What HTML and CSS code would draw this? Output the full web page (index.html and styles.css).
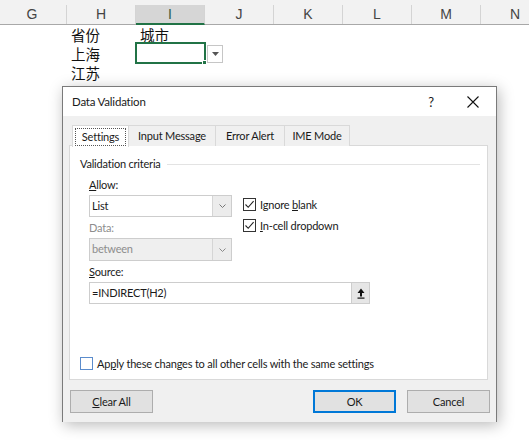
FILE: index.html
```html
<!DOCTYPE html>
<html>
<head>
<meta charset="utf-8">
<link rel="stylesheet" href="styles.css">
</head>
<body>
<div class="sheet">
  <div class="colhead">
    <div class="ch">G</div>
    <div class="ch">H</div>
    <div class="ch sel">I</div>
    <div class="ch">J</div>
    <div class="ch">K</div>
    <div class="ch">L</div>
    <div class="ch">M</div>
    <div class="ch">N</div>
  </div>
  <div class="grid">
    <div class="cell"></div><div class="cell">省份</div><div class="cell">城市</div><div class="cell"></div><div class="cell"></div><div class="cell"></div><div class="cell"></div><div class="cell"></div>
    <div class="cell"></div><div class="cell">上海</div><div class="cell active"><span class="selbox"><span class="handle"></span></span><span class="ddbtn"><svg width="7" height="4" viewBox="0 0 7 4"><path d="M0 0H7L3.5 4Z" fill="#555"/></svg></span></div><div class="cell"></div><div class="cell"></div><div class="cell"></div><div class="cell"></div><div class="cell"></div>
    <div class="cell"></div><div class="cell">江苏</div><div class="cell"></div><div class="cell"></div><div class="cell"></div><div class="cell"></div><div class="cell"></div><div class="cell"></div>
  </div>
</div>

<div class="dialog">
  <div class="titlebar">
    <span class="title">Data Validation</span>
    <span class="help">?</span>
    <span class="close"><svg width="12" height="12" viewBox="0 0 12 12"><path d="M0.5 0.5L11.5 11.5M11.5 0.5L0.5 11.5" stroke="#111" stroke-width="1.1" fill="none"/></svg></span>
  </div>
  <div class="dbody">
    <div class="tabs">
      <div class="tab active w1"><span class="focus">Settings</span></div>
      <div class="tab w2">Input Message</div>
      <div class="tab w3">Error Alert</div>
      <div class="tab w4">IME Mode</div>
    </div>
    <div class="panel">
      <div class="group"><span class="gtitle">Validation criteria</span><span class="gline"></span></div>
      <div class="criteria">
        <div class="leftcol">
          <div class="lbl"><u>A</u>llow:</div>
          <div class="combo"><span class="cval">List</span><span class="carrow"><svg width="7" height="4" viewBox="0 0 7 4"><path d="M0.5 0.5L3.5 3.5L6.5 0.5" stroke="#777" fill="none"/></svg></span></div>
          <div class="lbl dis lbl2">Data:</div>
          <div class="combo dis tall"><span class="cval">between</span><span class="carrow"><svg width="7" height="4" viewBox="0 0 7 4"><path d="M0.5 0.5L3.5 3.5L6.5 0.5" stroke="#888" fill="none"/></svg></span></div>
        </div>
        <div class="rightcol">
          <div class="check first"><span class="box"><svg width="11" height="11" viewBox="0 0 11 11"><path d="M1.5 5.5L4.2 8.3L9.6 2.2" stroke="#222" stroke-width="1.1" fill="none"/></svg></span><span>Ignore <u>b</u>lank</span></div>
          <div class="check second"><span class="box"><svg width="11" height="11" viewBox="0 0 11 11"><path d="M1.5 5.5L4.2 8.3L9.6 2.2" stroke="#222" stroke-width="1.1" fill="none"/></svg></span><span><u>I</u>n-cell dropdown</span></div>
        </div>
      </div>
      <div class="lbl lbl2 src"><u>S</u>ource:</div>
      <div class="source">
        <span class="sval">=INDIRECT(H2)</span>
        <span class="sbtn"><svg width="8" height="11" viewBox="0 0 8 11"><path d="M4 0.5L7.5 5H5V8.5H3V5H0.5Z" fill="#111"/><rect x="0.5" y="9.5" width="7" height="1.2" fill="#111"/></svg></span>
      </div>
      <div class="check apply"><span class="box blue"></span><span>Ap<u>p</u>ly these changes to all other cells with the same settings</span></div>
    </div>
    <div class="buttons">
      <div class="btn"><u>C</u>lear All</div>
      <div class="spacer"></div>
      <div class="btn ok">OK</div>
      <div class="btn">Cancel</div>
    </div>
  </div>
</div>
</body>
</html>
```

FILE: styles.css
```css
html, body {
  margin: 0;
  padding: 0;
}
body {
  width: 529px;
  height: 440px;
  overflow: hidden;
  background: #ffffff;
  position: relative;
  font-family: "Lato", "Noto Sans", sans-serif;
}

/* ---------- spreadsheet ---------- */
.sheet {
  margin-left: -2px;
}
.colhead {
  display: grid;
  grid-template-columns: repeat(8, 69px);
  height: 25px;
  padding-top: 5px;
  box-sizing: border-box;
  background: #f2f2f2;
  border-bottom: 1px solid #a8a8a8;
}
.ch {
  border-right: 1px solid #d4d4d4;
  font-family: "Liberation Sans", sans-serif;
  font-size: 14px;
  color: #444;
  text-align: center;
  line-height: 19px;
}
.ch.sel {
  background: #d6d6d6;
  border-bottom: 2px solid #217346;
  color: #2e5e44;
  line-height: 18px;
  margin-bottom: -1px;
}
.grid {
  display: grid;
  grid-template-columns: repeat(8, 69px);
  grid-auto-rows: 19px;
}
.cell {
  font-family: "Noto Sans CJK SC", sans-serif;
  font-size: 14.5px;
  line-height: 19px;
  padding-left: 4px;
  color: #111;
  position: relative;
}
.cell.active .selbox {
  position: absolute;
  left: -1px;
  top: -2px;
  width: 71px;
  height: 22px;
  box-sizing: border-box;
  border: 2px solid #217346;
}
.handle {
  position: absolute;
  right: -3px;
  bottom: -3px;
  width: 5px;
  height: 5px;
  background: #217346;
  border: 1px solid #fff;
  box-sizing: border-box;
}
.ddbtn {
  position: absolute;
  left: 71px;
  top: 1px;
  width: 16px;
  height: 18px;
  box-sizing: border-box;
  border: 1px solid #c6c6c6;
  background: #fff;
  display: flex;
  align-items: center;
  justify-content: center;
}

/* ---------- dialog ---------- */
.dialog {
  position: absolute;
  left: 62px;
  top: 86px;
  width: 435px;
  box-sizing: border-box;
  border: 1px solid #7a7a7a;
  border-bottom: none;
  background: #f0f0f0;
  box-shadow: 2px 3px 14px rgba(0, 0, 0, 0.28);
  font-size: 11px;
  letter-spacing: -0.2px;
  color: #1a1a1a;
}
.titlebar {
  height: 29px;
  background: #fff;
  display: flex;
  align-items: center;
  padding-left: 9px;
}
.title {
  font-size: 11.5px;
  flex: 1;
}
.help {
  width: 20px;
  text-align: center;
  font-size: 13px;
  margin-right: 26px;
}
.close {
  width: 12px;
  height: 12px;
  margin-right: 17px;
  display: flex;
}
.dbody {
  padding-top: 9px;
  padding-bottom: 9px;
}
.tabs {
  display: flex;
  padding-left: 9px;
  height: 21px;
  position: relative;
  z-index: 1;
}
.tab {
  height: 21px;
  box-sizing: border-box;
  border: 1px solid #d9d9d9;
  border-left: none;
  border-bottom: none;
  text-align: center;
  line-height: 20px;
  background: #f0f0f0;
}
.tab.active {
  background: #fff;
  border-left: 1px solid #d9d9d9;
  padding: 2px 2px 0;
  height: 22px;
}
.focus {
  display: block;
  border: 1px dotted #555;
  line-height: 16px;
}
.w1 { width: 57px; }
.w2 { width: 87px; }
.w3 { width: 69px; }
.w4 { width: 65px; }

.panel {
  margin-top: -1px;
  margin-left: 6px;
  width: 419px;
  height: 235px;
  box-sizing: border-box;
  border: 1px solid #d9d9d9;
  background: #fff;
}
.group {
  display: flex;
  align-items: center;
  margin: 10px 7px 0 10px;
  height: 16px;
}
.gtitle {
  line-height: 16px;
}
.gline {
  flex: 1;
  border-top: 1px solid #e3e3e3;
  margin-left: 6px;
}
.criteria {
  display: flex;
  margin-left: 19px;
}
.leftcol {
  width: 143px;
}
.lbl {
  line-height: 16px;
  margin-top: 5px;
}
.lbl2 {
  margin-top: 3px;
}
.lbl.dis {
  color: #8d8d8d;
}
.combo {
  margin-top: 2px;
  height: 22px;
  box-sizing: border-box;
  border: 1px solid #cdcdcd;
  background: #fff;
  display: flex;
}
.combo.tall {
  height: 23px;
}
.combo.dis {
  background: #efefef;
  color: #8d8d8d;
}
.cval {
  flex: 1;
  padding-left: 2px;
  line-height: 20px;
}
.carrow {
  width: 18px;
  border-left: 1px solid #d5d5d5;
  background: #ececec;
  display: flex;
  align-items: center;
  justify-content: center;
}
.rightcol {
  margin-left: 11px;
}
.check {
  display: flex;
  align-items: center;
  height: 16px;
  margin-top: 5px;
}
.check.first {
  margin-top: 24px;
}
.check.second {
  margin-top: 5px;
}
.box {
  width: 13px;
  height: 13px;
  box-sizing: border-box;
  border: 1px solid #333;
  background: #fff;
  margin-right: 4px;
  display: flex;
  align-items: center;
  justify-content: center;
}
.box.blue {
  border-color: #5b8ccc;
}
.src {
  margin-left: 19px;
}
.source {
  margin: 2px 0 0 19px;
  width: 281px;
  height: 22px;
  box-sizing: border-box;
  border: 1px solid #cdcdcd;
  display: flex;
}
.sval {
  flex: 1;
  line-height: 20px;
  padding-left: 2px;
}
.sbtn {
  width: 17px;
  background: #e6e6e6;
  border-left: 1px solid #cdcdcd;
  display: flex;
  align-items: center;
  justify-content: center;
}
.check.apply {
  margin: 51px 0 0 10px;
}

.buttons {
  display: flex;
  margin: 10px 6px 0 7px;
  gap: 11px;
}
.spacer {
  flex: 1;
}
.btn {
  width: 83px;
  height: 23px;
  box-sizing: border-box;
  border: 1px solid #adadad;
  background: #e1e1e1;
  text-align: center;
  line-height: 21px;
}
.btn.ok {
  border: 2px solid #0078d7;
  line-height: 19px;
}
```
